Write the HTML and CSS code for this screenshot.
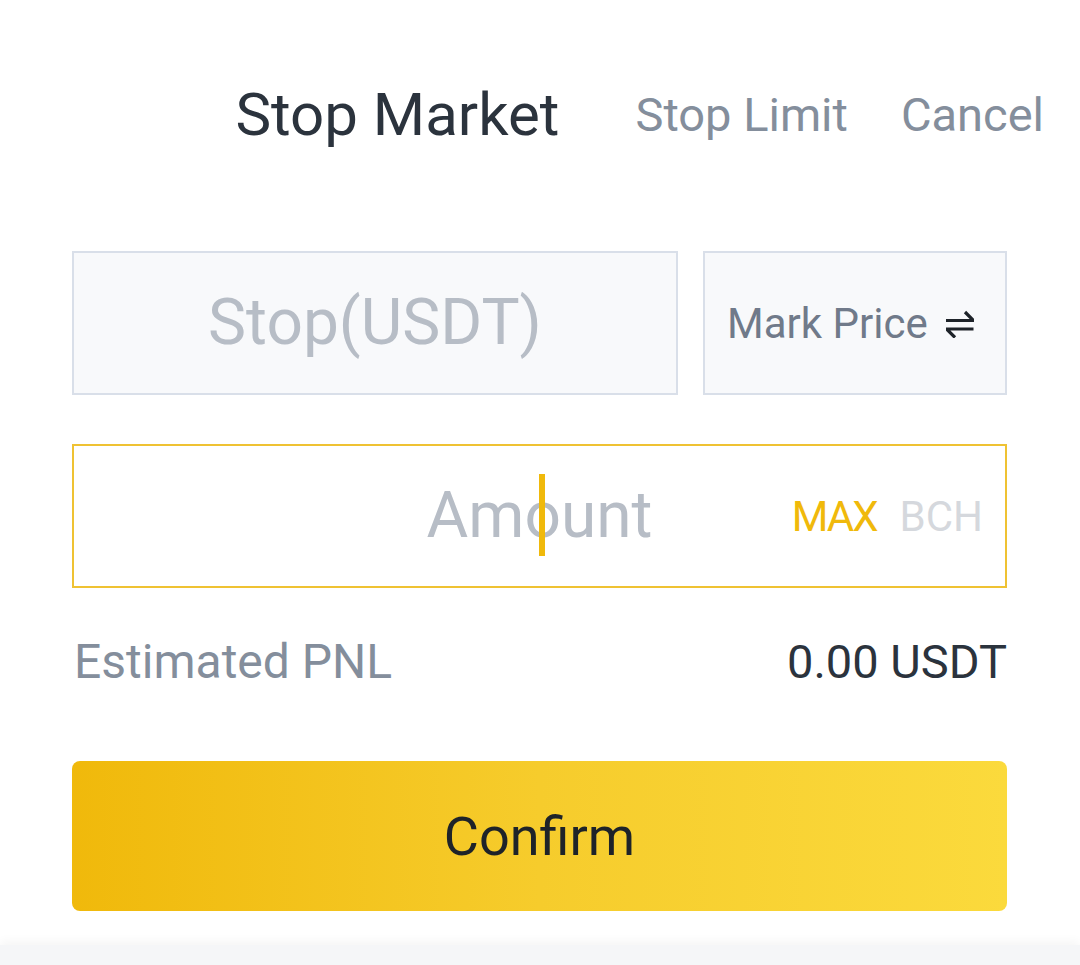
FILE: index.html
```html
<!DOCTYPE html>
<html>
<head>
<meta charset="utf-8">
<link rel="stylesheet" href="styles.css">
</head>
<body>
<div class="sheet">
  <div class="tabs">
    <span class="tab tab-active">Stop Market</span>
    <span class="tab tab-limit">Stop Limit</span>
    <span class="tab tab-cancel">Cancel</span>
  </div>
  <div class="form">
    <div class="row">
      <div class="field field-stop"><span class="placeholder">Stop(USDT)</span></div>
      <div class="field field-mark">
        <span class="mark-label">Mark Price</span>
        <svg class="swap" width="28" height="28" viewBox="0 0 28 28" fill="none" stroke="#1e2329" stroke-width="3.2" stroke-linecap="butt">
          <path d="M0 10.5H27.5L19 2"/>
          <path d="M27.5 19H0.5L9 27.5"/>
        </svg>
      </div>
    </div>
    <div class="field field-amount">
      <div class="amount-center">
        <span class="placeholder amount-ph">Am<span class="caret-wrap"><span class="caret"></span>o</span>unt</span>
      </div>
      <div class="amount-side">
        <span class="max">MAX</span>
        <span class="unit">BCH</span>
      </div>
    </div>
    <div class="pnl">
      <span class="pnl-label">Estimated PNL</span>
      <span class="pnl-value">0.00 USDT</span>
    </div>
    <button class="confirm">Confirm</button>
  </div>
  <div class="bottom-bar"></div>
</div>
</body>
</html>
```
FILE: styles.css
```css
* { box-sizing: border-box; }
html, body { margin: 0; padding: 0; background: #ffffff; }
body { font-family: Roboto, "Liberation Sans", sans-serif; }
.sheet { width: 1080px; height: 965px; overflow: hidden; display: flex; flex-direction: column; }
.tabs {
  display: flex;
  align-items: baseline;
  justify-content: flex-end;
  padding: 85px 36px 0 0;
  height: 160px;
}
.tab { line-height: 1; white-space: nowrap; }
.tab-active { font-size: 60px; color: #2b333d; }
.tab-limit { font-size: 47px; color: #848e9c; margin-left: 76px; position: relative; top: -4px; }
.tab-cancel { font-size: 47px; color: #848e9c; margin-left: 53px; position: relative; top: -4px; }
.form { padding: 91px 73px 0 72px; display: flex; flex-direction: column; }
.row { display: flex; gap: 25px; }
.field {
  height: 144px;
  border: 2px solid #d9dfe9;
  background: #f8f9fb;
  display: flex;
  align-items: center;
}
.field-stop { width: 606px; justify-content: center; }
.field-mark { flex: 1; padding-left: 22px; gap: 18px; }
.placeholder { font-size: 64px; color: #b7bdc6; line-height: 1; }
.mark-label { font-size: 42px; color: #707a8a; }
.swap { display: block; margin-top: 2px; }
.field-amount {
  margin-top: 49px;
  background: #ffffff;
  border-color: #efc233;
  position: relative;
  justify-content: flex-end;
  padding-right: 22px;
}
.amount-center { position: absolute; left: 0; right: 0; top: 0; bottom: 0; display: flex; align-items: center; justify-content: center; }
.caret-wrap { position: relative; }
.caret {
  position: absolute;
  left: 50%;
  top: -4px;
  width: 6px;
  margin-left: -4px;
  height: 82px;
  background: #f0b90b;
}
.amount-side { display: flex; gap: 23px; font-size: 42px; position: relative; }
.max { color: #f0b90b; letter-spacing: -2px; }
.unit { color: #d5d8dd; }
.pnl {
  display: flex;
  justify-content: space-between;
  align-items: center;
  height: 146px;
  padding-left: 2px;
}
.pnl-label { font-size: 48px; color: #848e9c; }
.pnl-value { font-size: 47px; color: #2b333d; }
.confirm {
  margin-top: 27px;
  height: 150px;
  border: none;
  border-radius: 8px;
  background: linear-gradient(90deg, #f0b90b 0%, #f6cc2c 50%, #fbda3c 100%);
  font-family: Roboto, "Liberation Sans", sans-serif;
  font-size: 54px;
  color: #1e2329;
  padding: 0;
}
.bottom-bar {
  margin-top: auto;
  height: 20px;
  background: #f5f6f8;
  box-shadow: 0 -4px 10px rgba(0,0,0,0.04);
}
```
